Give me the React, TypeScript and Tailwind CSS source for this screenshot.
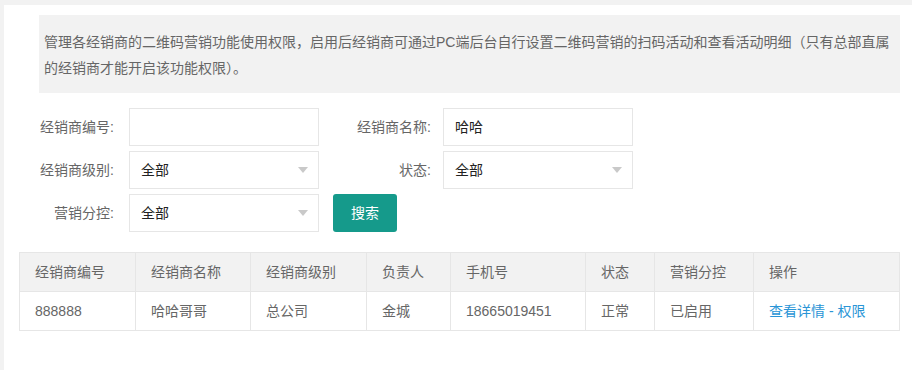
const FONT = "font-['Liberation_Sans','Noto_Sans_CJK_SC',sans-serif]";

const columns = [
  { title: '经销商编号', width: 'w-[116px]' },
  { title: '经销商名称', width: 'w-[115px]' },
  { title: '经销商级别', width: 'w-[116px]' },
  { title: '负责人', width: 'w-[84px]' },
  { title: '手机号', width: 'w-[135px]' },
  { title: '状态', width: 'w-[69px]' },
  { title: '营销分控', width: 'w-[99px]' },
  { title: '操作', width: '' },
];

const rows = [
  ['888888', '哈哈哥哥', '总公司', '金城', '18665019451', '正常', '已启用'],
];

function Caret() {
  return (
    <span className="absolute right-[10px] top-1/2 -translate-y-1/2 h-0 w-0 border-x-[5px] border-t-[6px] border-x-transparent border-t-[#c9c9c9]" />
  );
}

function Field({ value, select }: { value?: string; select?: boolean }) {
  return (
    <div className="relative flex h-[38px] w-[190px] items-center border border-[#e6e6e6] bg-white px-[11px] text-[14px] text-[#222]">
      {value}
      {select && <Caret />}
    </div>
  );
}

function Label({ text, w }: { text: string; w: string }) {
  return <div className={`${w} text-right text-[14px] text-[#666]`}>{text}</div>;
}

export default function App() {
  return (
    <div className={`h-[370px] overflow-hidden bg-[#f2f2f2] pl-1 pt-[5px] ${FONT}`}>
      <div className="h-full bg-white pl-[15px] pr-[12px] pt-[10px]">
        <div className="ml-[20px] h-[78px] bg-[#f2f2f2] pl-[5px] pr-[2px] pt-[14px] text-[14px] leading-[26px] text-[#666]">
          管理各经销商的二维码营销功能使用权限，启用后经销商可通过PC端后台自行设置二维码营销的扫码活动和查看活动明细（只有总部直属的经销商才能开启该功能权限）。
        </div>

        <div className="mt-[15px] flex flex-col gap-[5px]">
          <div className="flex items-center">
            <Label text="经销商编号:" w="w-[95px]" />
            <div className="ml-[15px]">
              <Field />
            </div>
            <Label text="经销商名称:" w="w-[112px]" />
            <div className="ml-[12px]">
              <Field value="哈哈" />
            </div>
          </div>
          <div className="flex items-center">
            <Label text="经销商级别:" w="w-[95px]" />
            <div className="ml-[15px]">
              <Field value="全部" select />
            </div>
            <Label text="状态:" w="w-[112px]" />
            <div className="ml-[12px]">
              <Field value="全部" select />
            </div>
          </div>
          <div className="flex items-center">
            <Label text="营销分控:" w="w-[95px]" />
            <div className="ml-[15px]">
              <Field value="全部" select />
            </div>
            <button className="ml-[14px] h-[38px] w-[64px] rounded-[3px] bg-[#159a8b] text-[14px] text-white">
              搜索
            </button>
          </div>
        </div>

        <table className="mt-[20px] w-[881px] table-fixed border-collapse text-[14px] text-[#666]">
          <thead>
            <tr className="h-[39px] bg-[#f2f2f2]">
              {columns.map((c) => (
                <th
                  key={c.title}
                  className={`${c.width} border border-[#e6e6e6] px-[15px] text-left font-normal`}
                >
                  {c.title}
                </th>
              ))}
            </tr>
          </thead>
          <tbody>
            {rows.map((r) => (
              <tr key={r[0]} className="h-[39px]">
                {r.map((v, i) => (
                  <td key={i} className="border border-[#e6e6e6] px-[15px]">
                    {v}
                  </td>
                ))}
                <td className="border border-[#e6e6e6] px-[15px] text-[#2a95d6]">
                  查看详情 - 权限
                </td>
              </tr>
            ))}
          </tbody>
        </table>
      </div>
    </div>
  );
}
